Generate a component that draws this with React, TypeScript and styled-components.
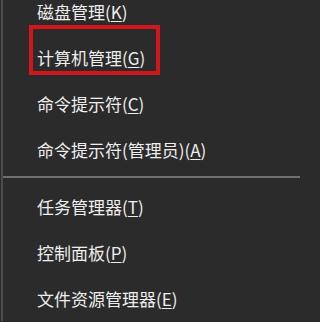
import React from "react";
import styled, { createGlobalStyle } from "styled-components";

const GlobalStyle = createGlobalStyle`
  html, body {
    margin: 0;
    padding: 0;
    background: #2b2b2b;
  }
  body {
    width: 300px;
    height: 322px;
    overflow: hidden;
  }
`;

type Entry =
  | { kind: "item"; label: string; key: string; highlighted?: boolean }
  | { kind: "separator" };

const entries: Entry[] = [
  { kind: "item", label: "磁盘管理", key: "K" },
  { kind: "item", label: "计算机管理", key: "G", highlighted: true },
  { kind: "item", label: "命令提示符", key: "C" },
  { kind: "item", label: "命令提示符(管理员)", key: "A" },
  { kind: "separator" },
  { kind: "item", label: "任务管理器", key: "T" },
  { kind: "item", label: "控制面板", key: "P" },
  { kind: "item", label: "文件资源管理器", key: "E" },
];

export default function App() {
  return (
    <>
      <GlobalStyle />
      <Menu>
        {entries.map((entry, i) =>
          entry.kind === "separator" ? (
            <Separator key={i} />
          ) : (
            <MenuItem key={i} $highlighted={entry.highlighted}>
              {entry.label}(<u>{entry.key}</u>)
            </MenuItem>
          )
        )}
      </Menu>
    </>
  );
}

const Menu = styled.ul`
  list-style: none;
  margin: -12px 0 0 1px;
  padding: 0;
  width: 297px;
  border-left: 2px solid #4c4c4c;
  background: #2b2b2b;
  font-family: "Noto Sans CJK SC", "Microsoft YaHei", sans-serif;
`;

const MenuItem = styled.li<{ $highlighted?: boolean }>`
  position: relative;
  display: flex;
  align-items: center;
  height: 46px;
  padding-left: 34px;
  color: #eeeeee;
  font-size: 17px;
  line-height: 1;
  white-space: nowrap;

  u {
    text-decoration-thickness: 1px;
    text-underline-offset: 2px;
  }

  ${({ $highlighted }) =>
    $highlighted &&
    `
    &::after {
      content: "";
      position: absolute;
      left: 26px;
      top: -9px;
      width: 123px;
      height: 42px;
      border: 4px solid #d3151c;
    }
  `}
`;

const Separator = styled.li`
  height: 2px;
  margin: 4px 0 5px;
  background: #6f6f6f;
`;
